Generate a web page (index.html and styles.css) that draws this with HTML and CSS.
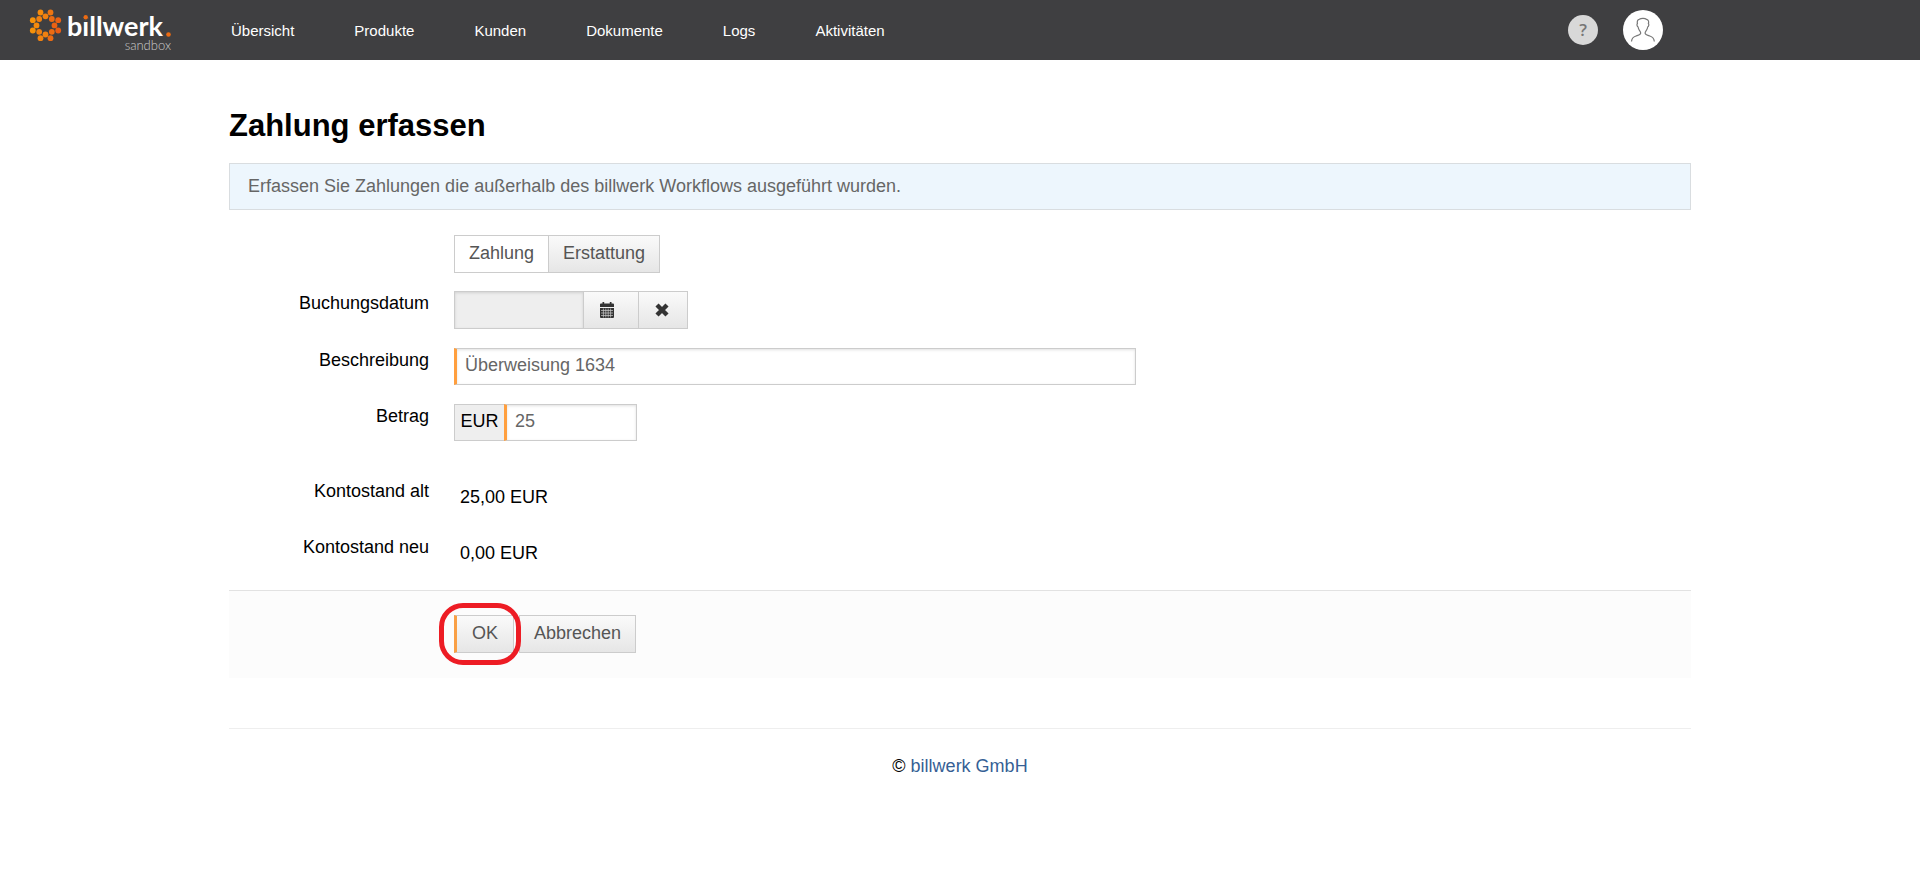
FILE: index.html
```html
<!DOCTYPE html>
<html lang="de">
<head>
<meta charset="utf-8">
<title>Zahlung erfassen – billwerk</title>
<link rel="stylesheet" href="styles.css">
</head>
<body>
<header class="topbar">
  <a class="logo" href="#" aria-label="billwerk sandbox">
    <svg width="144" height="44" viewBox="28 8 144 44">
      <g fill="#f08010">
        <circle cx="40.500" cy="12.500" r="2.900" fill="#f58a0c"/><circle cx="50.500" cy="12.500" r="2.900" fill="#ee7511"/>
        <circle cx="32.800" cy="20.200" r="2.900" fill="#f6920a"/><circle cx="58.200" cy="20.200" r="2.900" fill="#ea6113"/>
        <circle cx="32.800" cy="30.500" r="2.900" fill="#f6920a"/><circle cx="58.200" cy="30.500" r="2.900" fill="#e95c14"/>
        <circle cx="40.500" cy="38.200" r="2.900" fill="#f28310"/><circle cx="50.500" cy="38.200" r="2.900" fill="#ec6b12"/>
        <circle cx="45.500" cy="16.300" r="2.900"/><circle cx="45.500" cy="34.500" r="2.900"/>
        <circle cx="39.200" cy="19" r="2.900"/><circle cx="51.800" cy="19" r="2.900" fill="#ec6b12"/>
        <circle cx="36.500" cy="25.400" r="2.900" fill="#f58a0c"/><circle cx="54.500" cy="25.400" r="2.900" fill="#ea6113"/>
        <circle cx="39.200" cy="31.800" r="2.900"/><circle cx="51.800" cy="31.800" r="2.900" fill="#ec6b12"/>
      </g>
      <text class="logo-name" x="67" y="36">billwerk</text>
      <circle class="logo-mask" cx="85.700" cy="18" r="2.800"/>
      <circle class="logo-dot" cx="85.700" cy="17.300" r="2.200"/>
      <circle class="logo-dot" cx="168.500" cy="34.500" r="2.300"/>
      <text class="logo-sub" x="171" y="50" text-anchor="end">sandbox</text>
    </svg>
  </a>
  <nav class="menu">
    <a href="#">Übersicht</a>
    <a href="#">Produkte</a>
    <a href="#">Kunden</a>
    <a href="#">Dokumente</a>
    <a href="#">Logs</a>
    <a href="#">Aktivitäten</a>
  </nav>
  <div class="tools">
    <button class="help" type="button" aria-label="Hilfe">?</button>
    <button class="avatar" type="button" aria-label="Benutzerkonto">
      <svg width="40" height="40" viewBox="0 0 40 40" fill="none" stroke="#777" stroke-width="1.200">
        <path d="M8.500 31.500c.2-3.300 1.500-4.600 4.500-5.500 2.800-.8 4.500-1.200 4.700-2.800.1-1.400-.7-2-1.400-3-.6-.9-1-1.800-1.200-3.200-1.100-.5-1.500-2.700-.7-3.500-.5-2.300.2-3.900 1.900-4.200 2-1.300 5.600-1.200 7.400.1 1.700.5 2.400 2.100 1.700 4.100.8.800.4 3-.7 3.500-.2 1.400-.6 2.300-1.200 3.200-.7 1-1.500 1.600-1.400 3 .2 1.600 1.900 2 4.700 2.800 3 .9 4.300 2.200 4.500 5.500"/>
      </svg>
    </button>
  </div>
</header>

<main class="page">
  <h1>Zahlung erfassen</h1>
  <p class="notice">Erfassen Sie Zahlungen die außerhalb des billwerk Workflows ausgeführt wurden.</p>

  <form class="form">
    <div class="row type">
      <div class="field group">
        <button class="btn active" type="button" aria-pressed="true">Zahlung</button>
        <button class="btn" type="button" aria-pressed="false">Erstattung</button>
      </div>
    </div>
    <div class="row">
      <label for="date">Buchungsdatum</label>
      <div class="field group">
        <input class="input short" id="date" type="text" readonly>
        <button class="btn pick" type="button" aria-label="Datum wählen">
          <svg width="14" height="16" viewBox="0 0 14 16"><path fill="#333" d="M1 1.500h1.500V0h1.700v1.500h5.600V0h1.700v1.500H13q1 0 1 1V5H0V2.500q0-1 1-1zM0 6h14v9q0 1-1 1H1q-1 0-1-1z"/><path stroke="#ccc" stroke-width=".7" d="M1 8.500h12M1 11h12M1 13.500h12M3.400 6.500v9M5.800 6.500v9M8.200 6.500v9M10.600 6.500v9"/></svg>
        </button>
        <button class="btn clear" type="button" aria-label="Datum löschen">
          <svg width="14" height="14" viewBox="0 0 14 14"><path stroke="#333" stroke-width="4.400" d="M2 2l10 10M12 2L2 12"/></svg>
        </button>
      </div>
    </div>
    <div class="row">
      <label for="text">Beschreibung</label>
      <div class="field"><input class="input required wide" id="text" type="text" value="Überweisung 1634"></div>
    </div>
    <div class="row">
      <label for="amount">Betrag</label>
      <div class="field group"><span class="unit">EUR</span><input class="input required short" id="amount" type="text" value="25"></div>
    </div>
    <div class="row balance first">
      <label for="old">Kontostand alt</label>
      <output class="field value" id="old">25,00 EUR</output>
    </div>
    <div class="row balance">
      <label for="new">Kontostand neu</label>
      <output class="field value" id="new">0,00 EUR</output>
    </div>
    <div class="actions">
      <span class="marked"><button class="btn submit" type="submit">OK</button></span>
      <button class="btn" type="button">Abbrechen</button>
    </div>
  </form>

  <footer class="footer">© <a href="#">billwerk GmbH</a></footer>
</main>
</body>
</html>
```
FILE: styles.css
```css
* { box-sizing: border-box; }
body {
  margin: 0;
  background: #fff;
  color: #000;
  font: 18px/25px "Liberation Sans", Arial, sans-serif;
}
button, input { font: inherit; margin: 0; }
a { text-decoration: none; }
svg { display: block; }

.topbar {
  display: flex;
  align-items: center;
  height: 60px;
  padding: 0 257px 0 28px;
  background: #3f3f41;
}
.logo-name { font: 700 27px Lato, sans-serif; fill: #fff; }
.logo-sub { font: 300 13px Lato, sans-serif; fill: #ccc; }
.logo-mask { fill: #3f3f41; }
.logo-dot { fill: #ec6b12; }
.menu {
  display: flex;
  flex: 1;
  gap: 60px;
  margin-left: 59px;
  font-size: 15px;
}
.menu a { color: #fff; }
.tools { display: flex; align-items: center; gap: 25px; }
.help, .avatar { padding: 0; border: 0; border-radius: 50%; }
.help {
  width: 30px;
  height: 30px;
  background: #d8d8d8;
  color: #777;
  font: 600 17px/30px "Open Sans", sans-serif;
}
.avatar { width: 40px; height: 40px; background: #fff; }

.page { max-width: 1462px; margin: 0 auto; padding-top: 41px; }
h1 { margin: 0 0 12px; font-size: 31px; line-height: 50px; }
.notice {
  margin: 0 0 25px;
  padding: 10px 18px;
  border: 1px solid #d9dde0;
  background: #edf6fd;
  color: #666;
}

.row {
  display: grid;
  grid-template-columns: 200px 1fr;
  column-gap: 25px;
  margin-bottom: 19px;
}
.row.type { margin-bottom: 18px; }
.row label { text-align: right; }
.field { grid-column: 2; }
.group { display: flex; }

.btn {
  height: 38px;
  padding: 0 14px 2px;
  border: 1px solid #ccc;
  background: linear-gradient(#fafafa, #e6e6e6);
  color: #555;
}
.group .btn + .btn, .input + .btn { margin-left: -1px; }
.btn.active { background: #fff; }
.pick, .clear { display: flex; align-items: center; padding: 0 16px; }
.pick { width: 56px; }
.clear { width: 50px; }

.input {
  height: 37px;
  padding: 0 8px 2px;
  border: 1px solid #ccc;
  border-radius: 0;
  background: #fff;
  box-shadow: inset 0 1px 3px rgba(0, 0, 0, .12);
  color: #666;
}
.input[readonly] { height: 38px; background: #eee; }
.input.required { border-left: 3px solid #ff9f3e; }
.short { width: 130px; }
.unit + .short { width: 133px; }
.wide { width: 100%; max-width: 682px; }
.unit {
  width: 50px;
  padding: 4px 0 6px;
  border: 1px solid #ccc;
  border-right: 0;
  background: #eee;
  text-align: center;
}

.balance { margin-bottom: 24px; }
.balance.first { margin: 38px 0 25px; }
.value { padding: 6px 6px 0; }

.actions {
  display: flex;
  gap: 5px;
  padding: 24px 0 25px 225px;
  border-top: 1px solid #e2e2e2;
  background: #fcfcfc;
}
.marked { position: relative; }
.marked::after {
  content: "";
  position: absolute;
  inset: -12px -7px -12px -15px;
  border: 5px solid #ed1c24;
  border-radius: 24px;
  pointer-events: none;
}
.submit { width: 60px; border-left: 3px solid #f9a046; }

.footer {
  margin-top: 50px;
  padding: 25px 0;
  border-top: 1px solid #eee;
  text-align: center;
}
.footer a { color: #365f95; }
```
